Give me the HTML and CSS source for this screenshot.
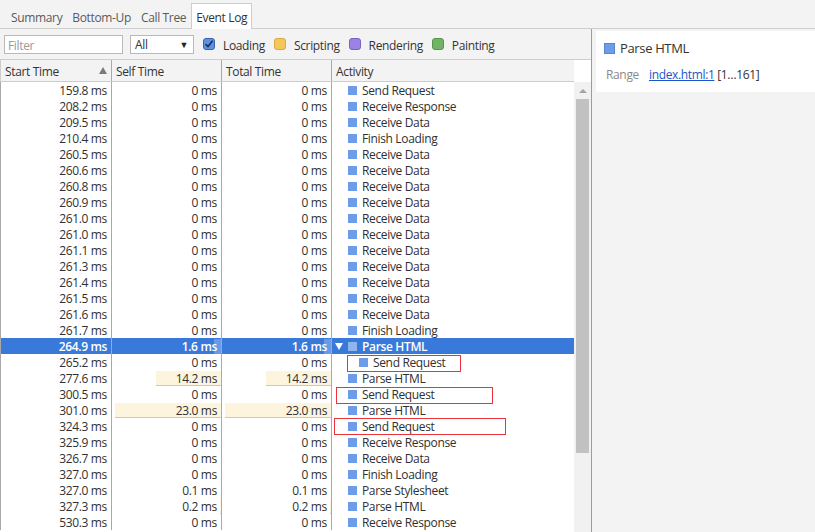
FILE: index.html
```html
<!DOCTYPE html>
<html>
<head>
<meta charset="utf-8">
<link rel="stylesheet" href="styles.css">
</head>
<body>
<div class="tabs">
  <div class="tab">Summary</div>
  <div class="tab">Bottom-Up</div>
  <div class="tab">Call Tree</div>
  <div class="tab active">Event Log</div>
</div>
<div class="main">
  <div class="left">
    <div class="toolbar">
      <div class="filter">Filter</div>
      <div class="select"><span>All</span><span class="caret">▼</span></div>
      <label class="cb"><span class="box checked"><svg width="10" height="10" viewBox="0 0 10 10"><path d="M1.5 5.2 L4 7.6 L8.6 1.8" fill="none" stroke="#1d2f57" stroke-width="1.6"/></svg></span><span class="lt">Loading</span></label>
      <label class="cb"><span class="box yellow"></span><span class="lt">Scripting</span></label>
      <label class="cb"><span class="box purple"></span><span class="lt">Rendering</span></label>
      <label class="cb"><span class="box green"></span><span class="lt">Painting</span></label>
    </div>
    <div class="grid">
      <div class="table">
        <div class="row head">
          <div class="c first">Start Time<span class="sort"></span></div>
          <div class="c">Self Time</div>
          <div class="c">Total Time</div>
          <div class="c act">Activity</div>
        </div>
        <div class="body">
          <div class="row"><div class="c num">159.8 ms</div><div class="c num">0 ms</div><div class="c num">0 ms</div><div class="c act"><i class="ic"></i>Send Request</div></div>
          <div class="row"><div class="c num">208.2 ms</div><div class="c num">0 ms</div><div class="c num">0 ms</div><div class="c act"><i class="ic"></i>Receive Response</div></div>
          <div class="row"><div class="c num">209.5 ms</div><div class="c num">0 ms</div><div class="c num">0 ms</div><div class="c act"><i class="ic"></i>Receive Data</div></div>
          <div class="row"><div class="c num">210.4 ms</div><div class="c num">0 ms</div><div class="c num">0 ms</div><div class="c act"><i class="ic"></i>Finish Loading</div></div>
          <div class="row"><div class="c num">260.5 ms</div><div class="c num">0 ms</div><div class="c num">0 ms</div><div class="c act"><i class="ic"></i>Receive Data</div></div>
          <div class="row"><div class="c num">260.6 ms</div><div class="c num">0 ms</div><div class="c num">0 ms</div><div class="c act"><i class="ic"></i>Receive Data</div></div>
          <div class="row"><div class="c num">260.8 ms</div><div class="c num">0 ms</div><div class="c num">0 ms</div><div class="c act"><i class="ic"></i>Receive Data</div></div>
          <div class="row"><div class="c num">260.9 ms</div><div class="c num">0 ms</div><div class="c num">0 ms</div><div class="c act"><i class="ic"></i>Receive Data</div></div>
          <div class="row"><div class="c num">261.0 ms</div><div class="c num">0 ms</div><div class="c num">0 ms</div><div class="c act"><i class="ic"></i>Receive Data</div></div>
          <div class="row"><div class="c num">261.0 ms</div><div class="c num">0 ms</div><div class="c num">0 ms</div><div class="c act"><i class="ic"></i>Receive Data</div></div>
          <div class="row"><div class="c num">261.1 ms</div><div class="c num">0 ms</div><div class="c num">0 ms</div><div class="c act"><i class="ic"></i>Receive Data</div></div>
          <div class="row"><div class="c num">261.3 ms</div><div class="c num">0 ms</div><div class="c num">0 ms</div><div class="c act"><i class="ic"></i>Receive Data</div></div>
          <div class="row"><div class="c num">261.4 ms</div><div class="c num">0 ms</div><div class="c num">0 ms</div><div class="c act"><i class="ic"></i>Receive Data</div></div>
          <div class="row"><div class="c num">261.5 ms</div><div class="c num">0 ms</div><div class="c num">0 ms</div><div class="c act"><i class="ic"></i>Receive Data</div></div>
          <div class="row"><div class="c num">261.6 ms</div><div class="c num">0 ms</div><div class="c num">0 ms</div><div class="c act"><i class="ic"></i>Receive Data</div></div>
          <div class="row"><div class="c num">261.7 ms</div><div class="c num">0 ms</div><div class="c num">0 ms</div><div class="c act"><i class="ic"></i>Finish Loading</div></div>
          <div class="row selected"><div class="c num">264.9 ms</div><div class="c num"><span class="bar" style="width:7px"></span><span class="t">1.6 ms</span></div><div class="c num"><span class="bar" style="width:7px"></span><span class="t">1.6 ms</span></div><div class="c act tree"><span class="tri"></span><i class="ic"></i>Parse HTML</div></div>
          <div class="row"><div class="c num">265.2 ms</div><div class="c num">0 ms</div><div class="c num">0 ms</div><div class="c act child"><i class="ic"></i>Send Request<span class="mark m1"></span></div></div>
          <div class="row"><div class="c num">277.6 ms</div><div class="c num"><span class="bar" style="width:65px"></span><span class="t">14.2 ms</span></div><div class="c num"><span class="bar" style="width:65px"></span><span class="t">14.2 ms</span></div><div class="c act"><i class="ic"></i>Parse HTML</div></div>
          <div class="row"><div class="c num">300.5 ms</div><div class="c num">0 ms</div><div class="c num">0 ms</div><div class="c act"><i class="ic"></i>Send Request<span class="mark m2"></span></div></div>
          <div class="row"><div class="c num">301.0 ms</div><div class="c num"><span class="bar" style="width:106px"></span><span class="t">23.0 ms</span></div><div class="c num"><span class="bar" style="width:106px"></span><span class="t">23.0 ms</span></div><div class="c act"><i class="ic"></i>Parse HTML</div></div>
          <div class="row"><div class="c num">324.3 ms</div><div class="c num">0 ms</div><div class="c num">0 ms</div><div class="c act"><i class="ic"></i>Send Request<span class="mark m3"></span></div></div>
          <div class="row"><div class="c num">325.9 ms</div><div class="c num">0 ms</div><div class="c num">0 ms</div><div class="c act"><i class="ic"></i>Receive Response</div></div>
          <div class="row"><div class="c num">326.7 ms</div><div class="c num">0 ms</div><div class="c num">0 ms</div><div class="c act"><i class="ic"></i>Receive Data</div></div>
          <div class="row"><div class="c num">327.0 ms</div><div class="c num">0 ms</div><div class="c num">0 ms</div><div class="c act"><i class="ic"></i>Finish Loading</div></div>
          <div class="row"><div class="c num">327.0 ms</div><div class="c num"><span class="bar" style="width:0.5px"></span><span class="t">0.1 ms</span></div><div class="c num"><span class="bar" style="width:0.5px"></span><span class="t">0.1 ms</span></div><div class="c act"><i class="ic"></i>Parse Stylesheet</div></div>
          <div class="row"><div class="c num">327.3 ms</div><div class="c num"><span class="bar" style="width:1px"></span><span class="t">0.2 ms</span></div><div class="c num"><span class="bar" style="width:1px"></span><span class="t">0.2 ms</span></div><div class="c act"><i class="ic"></i>Parse HTML</div></div>
          <div class="row"><div class="c num">530.3 ms</div><div class="c num">0 ms</div><div class="c num">0 ms</div><div class="c act"><i class="ic"></i>Receive Response</div></div>
        </div>
      </div>
      <div class="scroll">
        <div class="up"></div>
        <div class="thumb"></div>
      </div>
    </div>
  </div>
  <div class="right">
    <div class="card">
      <div class="title"><i class="ic big"></i>Parse HTML</div>
      <div class="range"><span class="lbl">Range</span><a class="link">index.html:1</a> [1…161]</div>
    </div>
  </div>
</div>
</body>
</html>
```

FILE: styles.css
```css
* { box-sizing: border-box; }
html, body { margin: 0; padding: 0; }
body {
  width: 815px;
  height: 532px;
  overflow: hidden;
  background: #f3f3f3;
  font-family: "Open Sans", "Noto Sans", sans-serif;
  font-size: 12px;
  letter-spacing: -0.35px;
  color: #303030;
}
.tabs {
  height: 29px;
  display: flex;
  align-items: flex-end;
  padding-left: 6px;
  border-bottom: 1px solid #cdcdcd;
  background: #f3f3f3;
}
.tab {
  height: 26px;
  line-height: 28px;
  padding: 0 4px;
  color: #5a5a5a;
  margin-bottom: -1px;
  border: 1px solid transparent;
  border-bottom: none;
}
.tab.active {
  background: #fff;
  border-color: #cdcdcd;
  color: #333;
}
.main {
  display: flex;
  height: 503px;
}
.left {
  width: 592px;
  display: flex;
  flex-direction: column;
  border-right: 1px solid #9c9c9c;
  background: #fff;
}
.toolbar {
  height: 31px;
  display: flex;
  align-items: center;
  padding-left: 4px;
  background: #f3f3f3;
  border-bottom: 1px solid #cdcdcd;
}
.filter {
  width: 119px;
  height: 19px;
  border: 1px solid #b9b9b9;
  background: #fff;
  color: #9a9a9a;
  padding-left: 3px;
  line-height: 19px;
}
.select {
  margin-left: 7px;
  width: 64px;
  height: 19px;
  border: 1px solid #b9b9b9;
  background: #fff;
  display: flex;
  justify-content: space-between;
  align-items: center;
  padding: 1px 5px 0 4px;
  color: #333;
}
.caret { font-size: 9px; color: #222; }
.cb {
  display: flex;
  align-items: center;
  margin-left: 9px;
  color: #333;
}
.lt { padding-top: 2px; }
.box {
  width: 12px;
  height: 12px;
  border-radius: 3px;
  margin-right: 8px;
  display: inline-flex;
  align-items: center;
  justify-content: center;
}
.box.checked { background: #5b92e3; border: 1px solid #3c63a8; }
.box.yellow { background: #f3c75a; border: 1px solid #d9a93c; }
.box.purple { background: #9c82e4; border: 1px solid #7a62c4; }
.box.green { background: #71b465; border: 1px solid #56964a; }
.grid {
  flex: 1;
  display: flex;
  overflow: hidden;
}
.table {
  flex: 1;
  overflow: hidden;
  position: relative;
}
.row {
  display: grid;
  grid-template-columns: 111px 110px 110px 1fr;
  grid-template-rows: 16px;
  height: 16px;
  white-space: nowrap;
}
.c {
  border-left: 1px solid #a9a9a9;
  position: relative;
  line-height: 18px;
}
.num {
  text-align: right;
  padding-right: 4px;
}
.head {
  grid-template-rows: 21px;
  height: 22px;
  background: #f3f3f3;
  border-bottom: 1px solid #cdcdcd;
  color: #333;
}
.head .c { padding-left: 4px; line-height: 23px; }
.sort {
  position: absolute;
  right: 4px;
  top: 7px;
  width: 0;
  height: 0;
  border-left: 4px solid transparent;
  border-right: 4px solid transparent;
  border-bottom: 7px solid #7a7a7a;
}
.head .c:first-child { border-left-color: #cdcdcd; }
.act {
  padding-left: 16px;
  display: flex;
  align-items: flex-start;
}
.head .act { padding-left: 4px; }
.ic {
  display: inline-block;
  width: 9px;
  height: 9px;
  margin-top: 4px;
  background: #6d9de8;
  margin-right: 5px;
  flex: none;
}
.tree { padding-left: 3px; }
.tri {
  flex: none;
  width: 0;
  height: 0;
  margin-top: 5px;
  margin-right: 5px;
  border-left: 4px solid transparent;
  border-right: 4px solid transparent;
  border-top: 7px solid #fff;
}
.child { padding-left: 27px; }
.bar {
  position: absolute;
  right: 0;
  top: 1px;
  bottom: 0;
  background: #fcf4dd;
  border-bottom: 1px solid #efc46b;
}
.t { position: relative; }
.selected {
  background: #3879d9;
  color: #fff;
  font-weight: 600;
}
.selected .ic { background: #8fb5ee; }
.selected .bar {
  background: #6a9ae3;
  border-bottom: none;
}
.mark {
  position: absolute;
  border: 1px solid #e8343a;
  height: 17px;
  top: 1px;
}
.m1 { left: 15px; width: 114px; }
.m2 { left: 4px; width: 157px; }
.m3 { left: 2px; width: 172px; top: 0; }
.scroll {
  width: 17px;
  background: #f1f1f1;
  margin-top: 22px;
  display: flex;
  flex-direction: column;
  align-items: center;
}
.up {
  margin-top: 7px;
  width: 0;
  height: 0;
  border-left: 4px solid transparent;
  border-right: 4px solid transparent;
  border-bottom: 4px solid #a3a3a3;
}
.thumb {
  margin-top: 6px;
  width: 13px;
  height: 354px;
  background: #c1c1c1;
}
.right {
  flex: 1;
  padding: 2px 0 0 4px;
  background: #f3f3f3;
}
.card {
  background: #fff;
  height: 61px;
  padding: 8px 0 0 8px;
}
.title {
  display: flex;
  align-items: center;
  font-size: 13px;
  color: #333;
}
.ic.big {
  width: 11px;
  height: 11px;
  margin-top: 0;
  background: #6d9de8;
  border: 1px solid #5a86cc;
  margin-right: 5px;
}
.range {
  margin-top: 9px;
  padding-left: 2px;
  color: #333;
}
.lbl {
  color: #8a8a8a;
  margin-right: 10px;
}
.link {
  color: #1a55c9;
  text-decoration: underline;
}
```
